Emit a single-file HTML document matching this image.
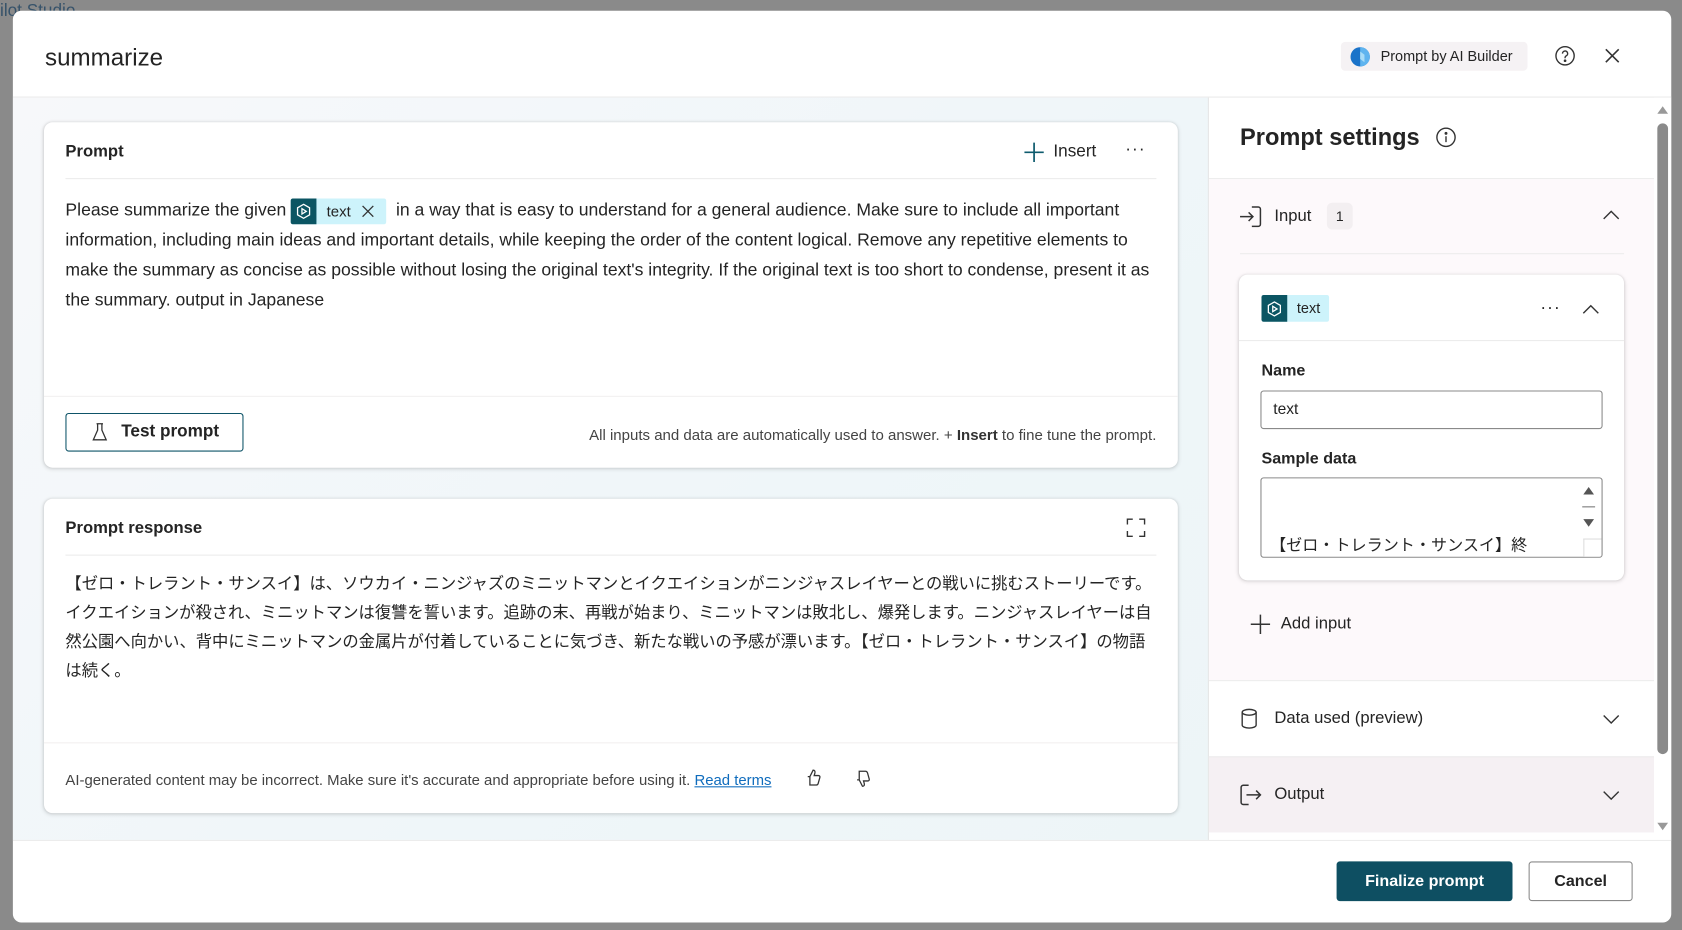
<!DOCTYPE html>
<html><head><meta charset="utf-8">
<style>
*{box-sizing:border-box;margin:0;padding:0}
html,body{width:1682px;height:930px;overflow:hidden;background:#8c8c8c}
body{font-family:"Liberation Sans","Noto Sans CJK JP",sans-serif;color:#242424}
#w{position:absolute;left:0;top:0;width:1568px;height:867px;transform:scale(1.07270);transform-origin:0 0}
.a{position:absolute}
.modal{left:12px;top:10px;width:1546px;height:850px;background:#fff;border-radius:8px;overflow:hidden}
.card{background:#fff;border-radius:8px;box-shadow:0 1px 4px rgba(0,0,0,.14),0 0 2px rgba(0,0,0,.08)}
.hr{height:1px;background:#ececec}
.chip{display:inline-flex;align-items:center;height:24px;background:#cdf3fb;border-radius:2px;vertical-align:middle}
.chip i{display:flex;align-items:center;justify-content:center;width:24px;height:24px;background:#0b5563;border-radius:2px 0 0 2px}
.t15{font-size:15px}
.b{font-weight:bold}
</style></head><body>
<div id="w">
<div class="a" style="left:0;top:0;width:1568px;height:867px;background:#8a8a8a"></div>
<div class="a" style="left:0;top:2px;font-size:16px;color:#36526a;">ilot Studio</div>

<div class="a modal">
 <div class="a" style="left:30px;top:31px;font-size:22.5px;">summarize</div>
 <div class="a" style="left:1238px;top:29px;width:174px;height:27px;background:#f5f2f4;border-radius:4px;font-size:13.5px;line-height:27px;padding-left:37px;white-space:nowrap">Prompt by AI Builder</div>
 <svg class="a" style="left:1246px;top:33px" width="20" height="20" viewBox="0 0 20 20"><circle cx="10" cy="10" r="9" fill="#1a73c9"/><path d="M10 1a9 9 0 0 1 0 18z" fill="#5fb4ef"/><path d="M10 5l4 3v7l-4-3z" fill="#a8dcf7"/></svg>
 <svg class="a" style="left:1437px;top:32px" width="20" height="20" viewBox="0 0 20 20" fill="none" stroke="#333" stroke-width="1.3"><circle cx="10" cy="10" r="8.5"/><path d="M7.6 8a2.4 2.4 0 1 1 3.4 2.1c-.7.4-1 .8-1 1.6v.6"/><circle cx="10" cy="14.6" r=".6" fill="#333"/></svg>
 <svg class="a" style="left:1484px;top:35px" width="14" height="14" viewBox="0 0 14 14" stroke="#333" stroke-width="1.5"><path d="M1 1l12 12M13 1L1 13"/></svg>
 <div class="a hr" style="left:0;top:80px;width:1546px;background:#eaeaea"></div>

 <div class="a" style="left:0;top:81px;width:1115px;height:692px;background:linear-gradient(135deg,#f7f8fa 0%,#eff6f9 60%,#edf5f7 100%)"></div>

 <div class="a card" style="left:29px;top:104px;width:1057px;height:322px">
  <div class="a b" style="left:20px;top:19px;font-size:15.5px">Prompt</div>
  <svg class="a" style="left:913px;top:18px" width="20" height="20" viewBox="0 0 20 20" stroke="#0e5b6e" stroke-width="1.6"><path d="M10 1v18M1 10h18"/></svg>
  <div class="a" style="left:941px;top:19px;font-size:16px">Insert</div>
  <div class="a" style="left:1008px;top:17px;font-size:16px;letter-spacing:1px">···</div>
  <div class="a hr" style="left:20px;top:52px;width:1017px"></div>
  <div class="a" style="left:20px;top:68px;line-height:28px;white-space:nowrap;font-size:16.4px">Please summarize the given <span class="chip"><i><svg width="16" height="16" viewBox="0 0 16 16" fill="none" stroke="#fff" stroke-width="1.2"><path d="M8 1.5l5.6 3.2v6.6L8 14.5l-5.6-3.2V4.7z"/><path d="M6.5 5.5l4 2.5-4 2.5z"/></svg></i><span style="padding:0 10px 0 9px;font-size:14px">text</span><svg width="12" height="12" viewBox="0 0 12 12" stroke="#333" stroke-width="1.2" style="margin-right:11px"><path d="M1 1l10 10M11 1L1 11"/></svg></span>&nbsp; in a way that is easy to understand for a general audience. Make sure to include all important<br>information, including main ideas and important details, while keeping the order of the content logical. Remove any repetitive elements to<br>make the summary as concise as possible without losing the original text's integrity. If the original text is too short to condense, present it as<br>the summary. output in Japanese</div>
  <div class="a hr" style="left:0;top:255px;width:1057px;background:#f2f0f0"></div>
  <div class="a" style="left:20px;top:271px;width:166px;height:36px;border:1px solid #0e5468;border-radius:3px"></div>
  <svg class="a" style="left:44px;top:280px" width="16" height="18" viewBox="0 0 16 18" fill="none" stroke="#333" stroke-width="1.2"><path d="M5 1h6M6 1v6L2 16h12L10 7V1"/></svg>
  <div class="a b" style="left:72px;top:280px;font-size:16px">Test prompt</div>
  <div class="a" style="right:20px;top:283px;font-size:14px;color:#444;white-space:nowrap">All inputs and data are automatically used to answer. + <b style="color:#333">Insert</b> to fine tune the prompt.</div>
 </div>

 <div class="a card" style="left:29px;top:455px;width:1057px;height:293px">
  <div class="a b" style="left:20px;top:19px;font-size:15.5px">Prompt response</div>
  <svg class="a" style="left:1009px;top:18px" width="18" height="18" viewBox="0 0 18 18" fill="none" stroke="#333" stroke-width="1.3"><path d="M1 6V1h5M12 1h5v5M17 12v5h-5M6 17H1v-5"/></svg>
  <div class="a hr" style="left:20px;top:52px;width:1017px"></div>
  <div class="a" style="left:20px;top:66px;width:1040px;font-size:15.2px;line-height:27px;white-space:nowrap">【ゼロ・トレラント・サンスイ】は、ソウカイ・ニンジャズのミニットマンとイクエイションがニンジャスレイヤーとの戦いに挑むストーリーです。<br>イクエイションが殺され、ミニットマンは復讐を誓います。追跡の末、再戦が始まり、ミニットマンは敗北し、爆発します。ニンジャスレイヤーは自<br>然公園へ向かい、背中にミニットマンの金属片が付着していることに気づき、新たな戦いの予感が漂います。【ゼロ・トレラント・サンスイ】の物語<br>は続く。</div>
  <div class="a hr" style="left:0;top:227px;width:1057px;background:#f2f0f0"></div>
  <div class="a" style="left:20px;top:254px;font-size:13.9px;color:#444;white-space:nowrap">AI-generated content may be incorrect. Make sure it's accurate and appropriate before using it. <span style="color:#0f6cbd;text-decoration:underline">Read terms</span></div>
  <svg class="a" style="left:709px;top:251px" width="16" height="18" viewBox="0 0 16 18" fill="none" stroke="#333" stroke-width="1.2"><path d="M3 8h2l3-6c1.5 0 2 1 1.7 2.5L9 7h4c1 0 1.6.9 1.3 1.8l-1.6 5.7c-.3.8-1 1.3-1.8 1.3H5V8"/></svg>
  <svg class="a" style="left:755px;top:252px" width="16" height="18" viewBox="0 0 16 18" fill="none" stroke="#333" stroke-width="1.2"><path d="M3 10h2l3 6c1.5 0 2-1 1.7-2.5L9 11h4c1 0 1.6-.9 1.3-1.8L12.7 3.5C12.4 2.7 11.7 2 10.9 2H5v8"/></svg>
 </div>

 <div class="a" style="left:1114px;top:81px;width:1px;height:692px;background:#e6e6e6"></div>
 <div class="a" style="left:1144px;top:105px;font-size:22px;font-weight:600">Prompt settings</div>
 <svg class="a" style="left:1326px;top:108px" width="20" height="20" viewBox="0 0 20 20" fill="none" stroke="#333" stroke-width="1.3"><circle cx="10" cy="10" r="8.5"/><path d="M10 9v5.5"/><circle cx="10" cy="6.3" r=".7" fill="#333"/></svg>
 <div class="a hr" style="left:1115px;top:156px;width:415px"></div>
 <div class="a" style="left:1115px;top:157px;width:415px;height:467px;background:#fdf9fb"></div>
 <svg class="a" style="left:1143px;top:182px" width="22" height="20" viewBox="0 0 22 20" fill="none" stroke="#333" stroke-width="1.4"><path d="M12 1h6a2 2 0 0 1 2 2v14a2 2 0 0 1-2 2h-6M1 10h12M9 6l4 4-4 4"/></svg>
 <div class="a" style="left:1176px;top:183px;font-size:15.5px">Input</div>
 <div class="a" style="left:1225px;top:179px;width:24px;height:25px;background:#f3eff1;border-radius:5px;text-align:center;line-height:25px;font-size:13px">1</div>
 <svg class="a" style="left:1482px;top:185px" width="16" height="10" viewBox="0 0 16 10" fill="none" stroke="#333" stroke-width="1.3"><path d="M1 9l7-7 7 7"/></svg>
 <div class="a hr" style="left:1144px;top:226px;width:358px"></div>
 <div class="a card" style="left:1143px;top:246px;width:359px;height:285px">
  <span class="a chip" style="left:21px;top:19px;height:25px"><i style="height:25px"><svg width="16" height="16" viewBox="0 0 16 16" fill="none" stroke="#fff" stroke-width="1.2"><path d="M8 1.5l5.6 3.2v6.6L8 14.5l-5.6-3.2V4.7z"/><path d="M6.5 5.5l4 2.5-4 2.5z"/></svg></i><span style="padding:0 8px 0 9px;font-size:13.5px">text</span></span>
  <div class="a" style="left:281px;top:23px;font-size:16px;letter-spacing:1px">···</div>
  <svg class="a" style="left:320px;top:27px" width="16" height="10" viewBox="0 0 16 10" fill="none" stroke="#333" stroke-width="1.3"><path d="M1 9l7-7 7 7"/></svg>
  <div class="a hr" style="left:0;top:61px;width:359px"></div>
  <div class="a t15 b" style="left:21px;top:81px">Name</div>
  <div class="a" style="left:20px;top:108px;width:319px;height:36px;border:1px solid #8a8a8a;border-radius:3px;font-size:14.5px;line-height:34px;padding-left:11px">text</div>
  <div class="a t15 b" style="left:21px;top:163px">Sample data</div>
  <div class="a" style="left:20px;top:189px;width:319px;height:75px;border:1px solid #8a8a8a;border-radius:3px;overflow:hidden">
   <div class="a" style="left:8px;top:51px;font-size:15px;white-space:nowrap">【ゼロ・トレラント・サンスイ】終</div>
   <div class="a" style="right:7px;top:8px;width:0;height:0;border:5px solid transparent;border-bottom:7px solid #555;border-top:0"></div>
   <div class="a" style="right:6px;top:26px;width:12px;height:1px;background:#777"></div>
   <div class="a" style="right:7px;top:38px;width:0;height:0;border:5px solid transparent;border-top:7px solid #555;border-bottom:0"></div>
   <div class="a" style="right:0;bottom:0;width:17px;height:17px;background:#fff;border-left:1px solid #ddd;border-top:1px solid #ddd"></div>
  </div>
 </div>
 <svg class="a" style="left:1153px;top:562px" width="20" height="20" viewBox="0 0 20 20" stroke="#333" stroke-width="1.4"><path d="M10 1v18M1 10h18"/></svg>
 <div class="a" style="left:1182px;top:563px;font-size:15.5px">Add input</div>
 <div class="a hr" style="left:1115px;top:624px;width:415px"></div>
 <svg class="a" style="left:1144px;top:650px" width="17" height="20" viewBox="0 0 17 20" fill="none" stroke="#333" stroke-width="1.3"><ellipse cx="8.5" cy="4" rx="6.5" ry="2.7"/><path d="M2 4v12c0 1.5 3 2.7 6.5 2.7S15 17.5 15 16V4"/></svg>
 <div class="a" style="left:1176px;top:651px;font-size:15.5px">Data used (preview)</div>
 <svg class="a" style="left:1482px;top:656px" width="16" height="10" viewBox="0 0 16 10" fill="none" stroke="#333" stroke-width="1.3"><path d="M1 1l7 7 7-7"/></svg>
 <div class="a" style="left:1115px;top:695px;width:415px;height:71px;background:#f5f0f3;border-top:1px solid #ececec"></div>
 <svg class="a" style="left:1143px;top:721px" width="22" height="20" viewBox="0 0 22 20" fill="none" stroke="#333" stroke-width="1.4"><path d="M9 1H4a2 2 0 0 0-2 2v14a2 2 0 0 0 2 2h5M7 10h13M16 6l4 4-4 4"/></svg>
 <div class="a" style="left:1176px;top:722px;font-size:15.5px">Output</div>
 <svg class="a" style="left:1482px;top:727px" width="16" height="10" viewBox="0 0 16 10" fill="none" stroke="#333" stroke-width="1.3"><path d="M1 1l7 7 7-7"/></svg>
 <div class="a" style="left:1530px;top:81px;width:16px;height:692px;background:#fff"></div>
 <div class="a" style="left:1533px;top:89px;width:0;height:0;border:5px solid transparent;border-bottom:7px solid #999;border-top:0"></div>
 <div class="a" style="left:1533px;top:105px;width:10px;height:588px;background:#8a8a8a;border-radius:5px"></div>
 <div class="a" style="left:1533px;top:757px;width:0;height:0;border:5px solid transparent;border-top:7px solid #999;border-bottom:0"></div>

 <div class="a hr" style="left:0;top:773px;width:1546px"></div>
 <div class="a" style="left:1234px;top:793px;width:164px;height:37px;background:#0e4f62;border-radius:3px;color:#fff;font-size:15px;font-weight:bold;text-align:center;line-height:37px">Finalize prompt</div>
 <div class="a" style="left:1413px;top:793px;width:97px;height:37px;border:1px solid #8a8a8a;border-radius:3px;font-size:15px;font-weight:bold;text-align:center;line-height:35px">Cancel</div>
</div>
</div>
</body></html>
